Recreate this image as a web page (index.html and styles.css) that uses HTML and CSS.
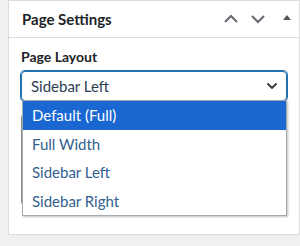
FILE: index.html
```html
<html>
<head>
    <link rel="stylesheet" href="styles.css">
</head>
<body>

<div class="panel">
    <div class="panel-header">
        <h2>Page Settings</h2>
        <div class="panel-actions">
            <svg class="icon" width="16" height="10" viewBox="0 0 16 10"><path d="M2 8 L8 2 L14 8" fill="none" stroke="#646970" stroke-width="2"/></svg>
            <svg class="icon" width="16" height="10" viewBox="0 0 16 10"><path d="M2 2 L8 8 L14 2" fill="none" stroke="#646970" stroke-width="2"/></svg>
            <svg class="icon toggle" width="10" height="6" viewBox="0 0 10 6"><path d="M1 6 L5 1 L9 6 Z" fill="#50575e"/></svg>
        </div>
    </div>
    <div class="panel-body">
        <label class="field-label">Page Layout</label>
        <div class="select-wrap">
            <div class="select">
                <span>Sidebar Left</span>
                <svg width="12" height="8" viewBox="0 0 12 8"><path d="M1.5 1.5 L6 6 L10.5 1.5" fill="none" stroke="#2c3338" stroke-width="1.8"/></svg>
            </div>
            <div class="field-below"></div>
            <ul class="dropdown">
                <li class="active">Default (Full)</li>
                <li>Full Width</li>
                <li>Sidebar Left</li>
                <li>Sidebar Right</li>
            </ul>
        </div>
    </div>
</div>

</body>
</html>
```

FILE: styles.css
```css
body {
    margin: 0;
    padding: 0;
    background-color: #f0f0f1;
    font-family: "Lato", "Noto Sans", sans-serif;
    overflow: hidden;
}

.panel {
    margin-left: 8px;
    width: 290px;
    height: 233px;
    background-color: #fff;
    border: 1px solid #dcdcde;
}

.panel-header {
    display: flex;
    align-items: center;
    justify-content: space-between;
    height: 36px;
    border-bottom: 1px solid #dcdcde;
    padding-left: 13px;
}

.panel-header h2 {
    margin: 0;
    font-size: 15px;
    font-weight: 700;
    color: #1d2327;
}

.panel-actions {
    display: flex;
    align-items: center;
    gap: 11px;
    margin-right: 7px;
}

.panel-actions .toggle {
    margin-left: 5px;
    margin-top: -5px;
}

.panel-body {
    padding: 10px 12px 0 12px;
}

.field-label {
    display: block;
    font-size: 14px;
    font-weight: 700;
    color: #1d2327;
    margin-bottom: 5px;
    line-height: 18px;
}

.select-wrap {
    position: relative;
}

.select {
    display: flex;
    align-items: center;
    justify-content: space-between;
    width: 266px;
    height: 30px;
    box-sizing: border-box;
    border: 1px solid #2271b1;
    box-shadow: 0 0 0 1px #2271b1;
    border-radius: 4px;
    padding: 0 8px 0 9px;
    font-size: 15px;
    color: #2c3e55;
}

.field-below {
    margin-top: 13px;
    width: 266px;
    height: 91px;
    box-sizing: border-box;
    border: 1px solid #8c8f94;
    border-radius: 3px;
}

.dropdown {
    position: absolute;
    left: 1px;
    top: 29px;
    width: 265px;
    margin: 0;
    padding: 0;
    list-style: none;
    background-color: #fff;
    border: 1px solid #a7aaad;
    box-sizing: border-box;
    box-shadow: 1px 1px 2px rgba(0, 0, 0, 0.25);
}

.dropdown li {
    height: 28.5px;
    line-height: 28.5px;
    padding-left: 9px;
    font-size: 15px;
    color: #34618f;
}

.dropdown li.active {
    background-color: #1a67d2;
    color: #fff;
}
```
